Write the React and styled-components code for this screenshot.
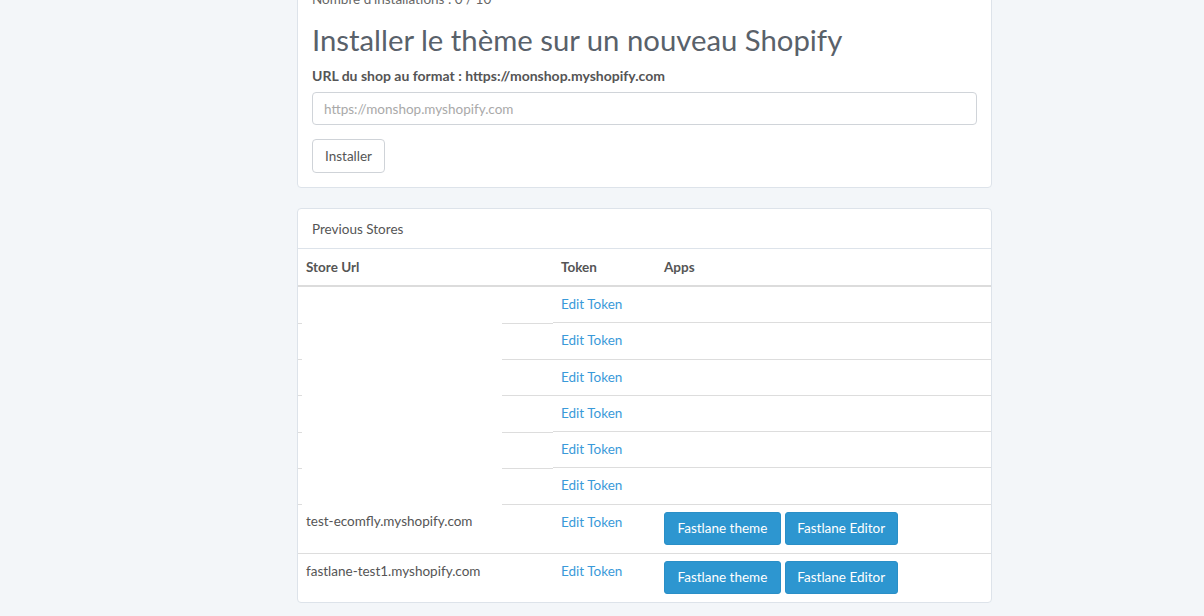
import React from 'react';
import styled, { createGlobalStyle } from 'styled-components';

const GlobalStyle = createGlobalStyle`
  html, body {
    margin: 0;
    background: #f3f6f9;
    font-family: "Lato", "Open Sans", sans-serif;
    color: #555;
    overflow: hidden;
  }
  * { box-sizing: border-box; }
`;

const Page = styled.div`
  padding-left: 297px;
  width: 992px;
`;

const Card = styled.section`
  background: #fff;
  border: 1px solid #dde3ea;
  border-radius: 4px;
  margin-bottom: 20px;
  margin-top: ${p => p.$offset || 0}px;
`;

const CardBody = styled.div`
  padding: 0 14px 14px 14px;
`;

const Counter = styled.p`
  margin: 0;
  font-size: 13.5px;
  line-height: 20px;
  color: #666;
`;

const Title = styled.h2`
  margin: 13px 0 9px;
  font-size: 29.3px;
  font-weight: 400;
  line-height: 36px;
  color: #59616a;
`;

const Label = styled.label`
  display: block;
  font-size: 14px;
  font-weight: 700;
  line-height: 18px;
  margin-bottom: 7px;
  color: #555;
`;

const Input = styled.input`
  display: block;
  width: 100%;
  height: 33px;
  padding: 6px 11px;
  border: 1px solid #d0d4d9;
  border-radius: 4px;
  font-family: inherit;
  font-size: 13.5px;
  color: #555;
  margin-bottom: 14px;
  &::placeholder { color: #a9a9a9; }
`;

const Button = styled.button`
  height: 34px;
  padding: 0 12px;
  border: 1px solid #cfd3d8;
  border-radius: 4px;
  background: #fff;
  font-family: inherit;
  font-size: 13.5px;
  color: #555;
`;

const CardHeader = styled.div`
  padding: 11px 14px 10px;
  font-size: 13.5px;
  line-height: 18px;
  color: #555;
  border-bottom: 1px solid #dde3ea;
`;

const Table = styled.table`
  width: 100%;
  border-collapse: collapse;
  font-size: 13.5px;
  color: #555;
`;

const Th = styled.th`
  text-align: left;
  font-weight: 700;
  padding: 9px 8px 8px;
  line-height: 19px;
  border-bottom: 2px solid #dcdcdc;
  width: ${p => p.$w || 'auto'};
`;

const Td = styled.td`
  vertical-align: top;
  padding: ${p => (p.$apps ? '7px 7px 8px 8px' : '8px 7px 8px 8px')};
  line-height: 19.28px;
  border-top: ${p => (p.$first ? 'none' : '1px solid #ddd')};
  ${p => p.$gap && `
    border-top: none;
    background:
      linear-gradient(#ddd, #ddd) 0 0 / 4px 1px no-repeat,
      linear-gradient(#ddd, #ddd) 204px 0 / 100% 1px no-repeat;
  `}
`;

const TokenLink = styled.a`
  color: #3a9ad9;
  text-decoration: none;
`;

const Apps = styled.div`
  display: flex;
  gap: 4px;
`;

const AppButton = styled.button`
  height: 33px;
  padding: 0 ${p => p.$pad || 12}px;
  border: 1px solid #2a8fc7;
  border-radius: 3px;
  background: #2d96d0;
  color: #fff;
  font-family: inherit;
  font-size: 13.5px;
`;

const rows = [
  { url: '' },
  { url: '' },
  { url: '' },
  { url: '' },
  { url: '' },
  { url: '' },
  { url: 'test-ecomfly.myshopify.com', apps: true },
  { url: 'fastlane-test1.myshopify.com', apps: true },
];

export default function App() {
  return (
    <>
      <GlobalStyle />
      <Page>
        <Card $offset={-12}>
          <CardBody>
            <Counter>Nombre d'installations : 0 / 10</Counter>
            <Title>Installer le thème sur un nouveau Shopify</Title>
            <Label>URL du shop au format : https://monshop.myshopify.com</Label>
            <Input placeholder="https://monshop.myshopify.com" />
            <Button>Installer</Button>
          </CardBody>
        </Card>
        <Card>
          <CardHeader>Previous Stores</CardHeader>
          <Table>
            <thead>
              <tr>
                <Th $w="255px">Store Url</Th>
                <Th $w="103px">Token</Th>
                <Th>Apps</Th>
              </tr>
            </thead>
            <tbody>
              {rows.map((r, i) => (
                <tr key={i}>
                  <Td $first={i === 0} $gap={i > 0 && i < 7}>{r.url}</Td>
                  <Td $first={i === 0}>
                    <TokenLink href="#">Edit Token</TokenLink>
                  </Td>
                  <Td $first={i === 0} $apps={r.apps}>
                    {r.apps && (
                      <Apps>
                        <AppButton $pad={12.5}>Fastlane theme</AppButton>
                        <AppButton $pad={11.5}>Fastlane Editor</AppButton>
                      </Apps>
                    )}
                  </Td>
                </tr>
              ))}
            </tbody>
          </Table>
        </Card>
      </Page>
    </>
  );
}
